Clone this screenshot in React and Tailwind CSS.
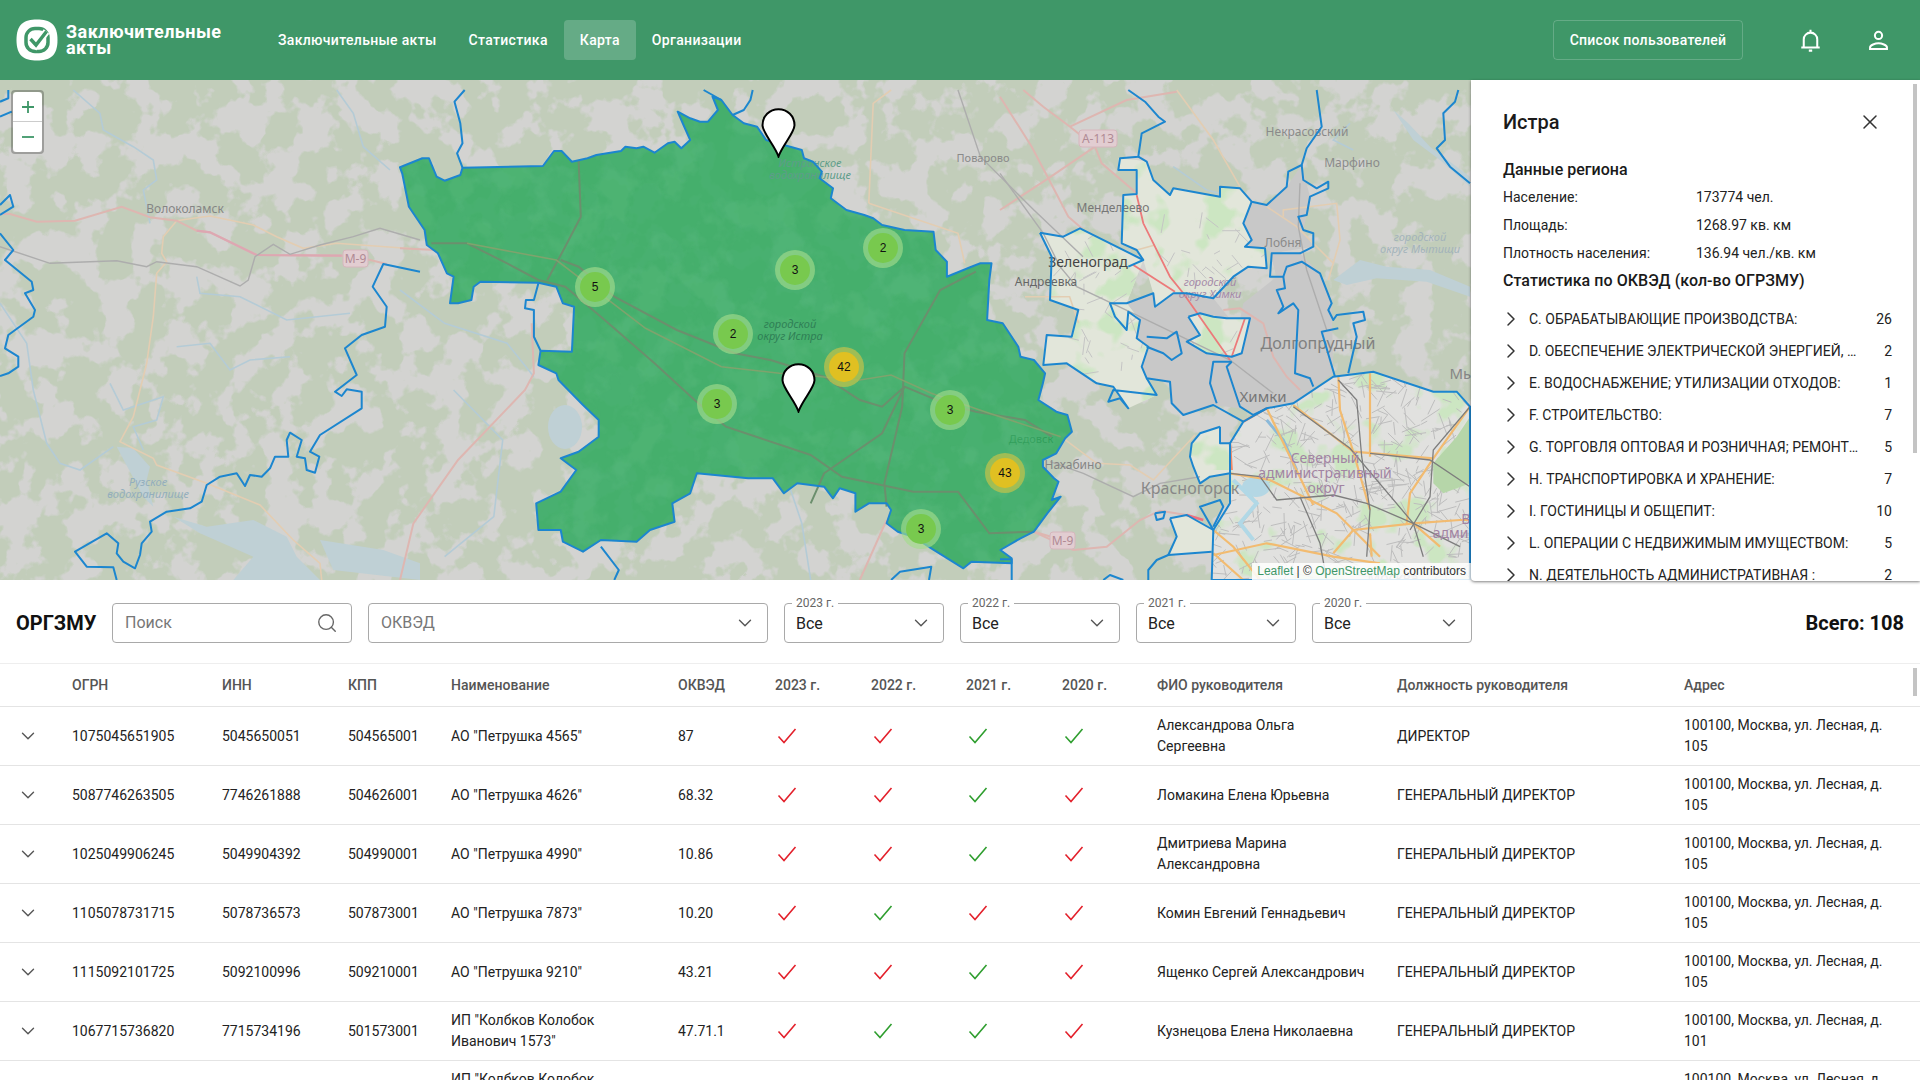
import React from "react";
import { Search, ChevronDown, ChevronRight, X } from "lucide-react";

// reads "x,y x,y" traced off the crops and turns it into page coords
const conv = (ox, oy, sx, sy) => (s) =>
  s.trim().split(/\s+/).map((p) => {
    const [x, y] = p.split(",").map(Number);
    return `${(ox + x / sx).toFixed(1)},${(oy + y / sy).toFixed(1)}`;
  }).join(" ");
const west = conv(0, 90, 3, 3);
const mid = conv(400, 90, 2.24, 3);
const east = conv(1000, 90, 3, 3);

const REGION = mid(`0,232 50,205 65,205 82,260 100,272 135,255 140,233 320,228 345,183 362,183 385,215 420,205 440,195 495,183 505,170 530,175 545,170 570,188 600,160 615,155 630,175 650,150 635,105 622,65 650,85 672,95 690,95 712,60 700,20 720,30 745,75 770,100 800,110 820,150 860,165 900,180 905,205 925,215 945,245 940,265 970,295 965,325 1000,360 1040,375 1060,385 1080,405 1130,420 1195,425 1200,480 1225,515 1225,560 1280,530 1300,520 1325,520 1320,570 1315,690 1350,700 1385,770 1390,800 1420,810 1445,850 1440,880 1430,930 1470,965 1495,975 1505,1025 1490,1045 1470,1090 1440,1110 1440,1130 1465,1165 1475,1175 1460,1230 1480,1220 1450,1270 1420,1325 1390,1345 1345,1380 1370,1405 1370,1420 1280,1415 1262,1435 1190,1375 1150,1340 1115,1325 1090,1300 1100,1260 1090,1240 1050,1240 1020,1265 1020,1210 985,1195 970,1225 950,1190 890,1180 860,1210 835,1165 780,1165 665,1150 660,1170 650,1210 610,1240 615,1295 560,1320 530,1355 450,1350 410,1385 365,1355 360,1320 310,1320 305,1240 360,1205 395,1140 360,1105 400,1085 445,1040 445,990 410,945 355,870 350,850 310,825 315,782 385,785 390,650 365,640 350,590 310,578 180,575 165,590 160,630 130,640 112,640 120,560 105,550 85,490 60,465 55,420 20,350 5,250`);

const MOSCOW = east(`635,1470 640,1320 690,1240 690,1060 730,995 800,955 880,940 1000,860 1120,845 1300,905 1370,905 1410,950 1410,1470`);

// pale built-up and park fills around Khimki and Zelenograd
const LIGHT = [
  east(`410,240 355,240 355,205 410,210 440,215 460,270 510,315 520,295 660,320 660,290 720,295 755,335 730,400 755,450 735,470 795,475 800,535 745,530 700,560 640,625 560,610 520,610 465,650 460,610 430,510 410,480 365,460 370,315 410,312`),
  east(`120,428 190,440 240,415 430,510 380,640 420,690 410,745 445,770 425,830 440,865 470,915 385,955 340,890 290,880 200,820 130,825 140,735 215,740 235,660 150,630 155,500`),
  east(`565,680 600,670 640,680 680,685 750,685 725,790 695,800 620,790 560,755 600,735`),
  east(`660,1010 600,1030 575,1060 570,1100 580,1130 600,1180 630,1160 690,1150 690,1060 660,1060`),
  east(`510,1285 560,1275 640,1320 635,1385 510,1395 530,1340`),
];
const GRAY = [
  east(`380,640 460,610 520,610 640,625 700,700 760,960 640,945 550,975 515,940 510,875 440,865 425,830 445,770 410,745 420,690`),
  east(`810,490 900,490 960,550 995,640 1000,850 880,940 760,975 680,830 695,815 730,640 830,560`),
  east(`800,345 860,290 905,225 930,320 920,375 910,420 940,470 815,490 795,475 735,470 755,450 730,400 755,335`),
];

const BORDERS = [
  west(`1260,545 1150,522 1118,590 1160,650 1155,710 1085,735 1035,775 1070,855 1005,905 1025,918 1040,898 1085,905 1085,955 960,1035 930,1085 958,1100 945,1148 920,1140 915,1105 890,1100 905,1050 870,1028 860,1050 865,1100 825,1100 810,1135 785,1160 750,1155 735,1188 710,1150 660,1160 620,1185 605,1235 570,1255 500,1265 450,1295 455,1325 425,1360 420,1395 405,1435 370,1415 350,1390 355,1360 320,1330 225,1385 260,1430 340,1432 350,1470`),
  west(`0,375 40,350 30,315 0,345`),
  west(`0,430 40,480 15,510 95,575 100,600 75,610 105,660 100,680 25,735 15,775 55,800 55,830 25,850 0,858`),
  west(`0,35 25,25 25,0`),
  west(`35,65 0,80`),
  mid(`145,0 122,35 135,100 140,160 128,190 140,233`),
  mid(`680,0 720,30`),
  mid(`790,0 785,30 770,60 745,75`),
  mid(`315,782 300,740 300,660 280,655 282,630 300,630 310,580`),
  mid(`450,1370 490,1440 480,1470`),
  mid(`1100,1470 1120,1445 1190,1430 1185,1470`),
  east(`385,0 435,35 475,80 495,95 425,130 415,200 360,205 355,240 410,240 410,312 370,315 365,460 410,480 430,510 385,530`),
  east(`415,200 440,215 460,270 510,315 520,295 660,320 660,290 720,295 755,335 800,345 860,290 865,245 905,225 920,175 965,110 950,0`),
  east(`755,335 730,400 755,450 735,470 795,475 800,535 745,530 700,560 640,625 560,610 520,610 465,650 460,610 380,640 330,640 345,680 380,720 385,665 420,690 410,745 445,770 425,830 440,865 510,875 515,940 550,975 640,945 730,995`),
  east(`905,225 910,270 950,295 985,275 985,295 930,320 920,375 895,380 910,420 940,430 940,470 900,490 815,490 810,560 850,560 860,530 905,515 960,550 995,640 985,660 1000,690 1010,675 1090,665 1095,690 1060,700 1070,740 1045,850`),
  east(`1005,860 965,725 1015,715`),
  east(`850,560 855,595 830,600 850,650 835,670 880,640 895,660 885,850 930,865 940,890`),
  east(`120,428 190,440 240,415 430,510`),
  east(`120,428 155,500 150,630 235,660 215,740 140,735 130,825 200,820 290,880 340,890 385,955 360,925 325,935 340,900 470,915 440,865`),
  east(`440,740 500,745 530,725 545,790 515,810 490,790 440,770`),
  east(`565,680 600,670 640,680 680,685 750,685 725,790 695,800 620,790 560,755 600,735 565,680`),
  east(`695,815 640,815 630,880 650,940`),
  east(`695,815 680,830 720,950 760,975 800,955`),
  east(`660,1010 600,1030 575,1060 570,1100 580,1130 600,1180 630,1160 690,1150`),
  east(`660,1010 660,1060 690,1060`),
  east(`465,1270 495,1265 490,1285 470,1290 465,1270`),
  east(`510,1285 560,1275 640,1320 600,1250 660,1230 670,1250 640,1310`),
  east(`510,1285 530,1340 505,1395 635,1385`),
  east(`445,1470 445,1440 470,1410 505,1395`),
  east(`310,1470 330,1455 370,1470`),
  east(`0,1408 35,1408 35,1470`),
  east(`1375,0 1365,35 1330,70 1335,150 1310,175 1350,230 1410,280`),
];

const RIVERS = [
  west(`220,0 300,70 310,120 400,170 460,210 470,270 430,300 450,400`),
  west(`1010,0 1060,70 1090,170 1170,240`),
  west(`530,770 630,760 690,840 750,810 870,800`),
  west(`590,560 600,610 720,620 860,690 1050,670`),
  west(`0,640 80,760 100,900 140,1060 180,1120 240,1140 340,1070`),
  west(`330,880 370,960 490,920 470,990 400,1010 430,1080`),
  east(`520,230 620,300 700,320`),
  east(`1050,100 1000,150 1060,180`),
  mid(`0,600 100,700 240,760 300,860`),
  mid(`120,900 230,1050 210,1280 100,1400`),
  mid(`870,1180 900,1300 920,1470`),
];
const PINK = [
  west(`0,372 30,372 110,395 225,392 365,350 450,382 530,392 590,422 630,427 770,495 1025,497 1110,510 1160,522`),
  mid(`0,475 80,480`),
  mid(`1420,1325 1470,1345`),
  east(`0,20 95,170 145,265 205,380 245,415`),
  east(`0,360 145,265 285,170 210,110 130,50 70,0`),
  east(`285,170 305,220 410,310`),
  east(`210,110 380,30 530,5`),
  east(`100,1325 220,1380 320,1370 420,1290 480,1262 560,1275`),
  east(`670,660 720,655 790,700 820,800 860,860 900,900`),
  mid(`0,1470 30,1300 130,1110 280,900 300,850 295,700`),
  mid(`1030,1470 1090,1290`),
];
const TAN = [
  west(`530,392 580,385 630,378 760,405 830,440 910,475 1010,460 1260,478`),
  west(`530,392 490,440 485,490 500,515 470,550 460,680 440,820 400,980 360,1055 460,1105 470,1125 620,1180 780,1245 880,1350 960,1420 965,1470`),
  mid(`1050,340 1060,40 1100,0`),
  mid(`1050,340 1250,430 1265,520`),
  mid(`1400,620 1500,620 1520,700`),
  east(`530,0 640,150 720,290`),
  east(`800,350 890,410 1000,520`),
  east(`850,380 850,360 1010,340 1020,450 985,570`),
  east(`410,480 465,465`),
  east(`190,1045 290,1120 390,1125 460,1170 585,1035`),
];
const RAIL = [
  west(`0,470 150,520 350,512 440,530 470,515 590,530 720,588 745,570 765,500 820,463 870,493 960,465 1060,440 1140,415 1260,450`),
  east(`0,250 130,430 180,530 230,590 420,680 690,810 820,910`),
  east(`900,280 895,410 920,540 980,720`),
  east(`150,1115 250,1150 400,1220 480,1180 600,1160`),
  mid(`1250,0 1300,200 1420,360 1530,500`),
];
const WARM = [east(`410,315 430,400 510,560 550,610 690,810`), east(`735,685 695,800`), east(`400,525 525,605`)];

// roads that run through the filled region, they show through as dark lines
const REGION_ROADS = [
  mid(`70,460 150,460 240,520 310,570 370,590 450,680 570,820 660,930 730,1010 920,1095 990,1160 1150,1205 1250,1205 1320,1330 1420,1325`),
  mid(`360,510 400,530 480,620 620,720 750,790 830,810 950,860 1030,930 1080,950 1130,890 1220,940 1290,965 1400,990 1460,1040`),
  mid(`400,210 405,380 370,470 330,570`),
  mid(`1290,545 1210,600 1130,790 1125,950 1085,1180 1090,1250`),
  mid(`1130,890 1080,1030 950,1150 920,1240`),
];
const REGION_TAN = [mid(`150,460 350,510 550,715 720,830 850,850 1030,870 1100,855 1190,910 1310,965 1480,1040`)];

const MOSCOW_ROADS = [
  east(`800,955 940,1245`),
  east(`880,945 1060,1085 1300,1105 1410,950`),
  east(`1015,855 1020,960 1060,1085 1110,1260`),
  east(`1110,850 1110,1100`),
  east(`690,1150 810,1170 1010,1270 1140,1400`),
  east(`690,1150 580,1035`),
  east(`1300,1105 1230,1210 1220,1300`),
  east(`1000,1390 1060,1320 1240,1300 1320,1370`),
  east(`640,1395 800,1360 1000,1400 1140,1420`),
  east(`640,1320 700,1370 780,1470`),
  east(`1240,1300 1380,1290 1410,1290`),
  east(`640,1390 730,1470`),
  east(`1110,1330 1115,1400`),
];
const MOSCOW_RAIL = [
  east(`1015,870 1070,930 1085,1100 1110,1260 1100,1400`),
  east(`690,1150 780,1160 830,1230 1000,1215 1100,1240 1240,1300 1380,1370`),
  east(`880,950 1050,1075 1240,1300 1270,1400`),
  east(`900,1220 960,1360 980,1470`),
  east(`1410,950 1300,1080 1290,1220 1230,1320`),
  east(`1110,1090 1290,1110 1410,1190`),
];

// thin grey street mesh for the city fills, seeded so it stays put
let seed = 41;
const rnd = () => {
  seed = (seed * 16807) % 2147483647;
  return seed / 2147483647;
};
const streets = Array.from({ length: 520 }, () => {
  const x = 1205 + rnd() * 270;
  const y = 370 + rnd() * 215;
  const a = rnd() * 6.28;
  const l = 6 + rnd() * 18;
  return `M${x.toFixed(1)} ${y.toFixed(1)}L${(x + Math.cos(a) * l).toFixed(1)} ${(y + Math.sin(a) * l).toFixed(1)}`;
}).join("");
const streetsNorth = Array.from({ length: 110 }, () => {
  const x = 1045 + rnd() * 230;
  const y = 225 + rnd() * 175;
  const a = rnd() * 6.28;
  const l = 5 + rnd() * 15;
  return `M${x.toFixed(1)} ${y.toFixed(1)}L${(x + Math.cos(a) * l).toFixed(1)} ${(y + Math.sin(a) * l).toFixed(1)}`;
}).join("");

const LABELS = [
  ["Волоколамск", 185, 213, 12, "#858585"],
  ["Поварово", 983, 162, 11, "#8a8a8a"],
  ["Некрасовский", 1307, 136, 12, "#8a8a8a"],
  ["Марфино", 1352, 167, 12, "#8a8a8a"],
  ["Менделеево", 1113, 212, 12, "#777"],
  ["Зеленоград", 1088, 267, 14, "#444"],
  ["Андреевка", 1046, 286, 12, "#666"],
  ["Лобня", 1283, 247, 12, "#8a8a8a"],
  ["Долгопрудный", 1318, 349, 16, "#808080"],
  ["Мы", 1462, 379, 15, "#858585"],
  ["Химки", 1263, 402, 15, "#777"],
  ["Дедовск", 1031, 443, 11, "#4b6a55"],
  ["Нахабино", 1073, 469, 12, "#858585"],
  ["Красногорск", 1190, 494, 16, "#888"],
  ["Москва", 1393, 583, 14, "#888"],
];
const ITALIC = [
  ["Рузское", 148, 486, "#93aebd"],
  ["водохранилище", 148, 498, "#93aebd"],
  ["городской", 1420, 241, "#a3b3bb"],
  ["округ Мытищи", 1420, 253, "#a3b3bb"],
  ["городской", 1210, 286, "#a58aa8"],
  ["округ Химки", 1210, 298, "#a58aa8"],
];
// these two sit on top of the green fill
const ITALIC_OVER = [
  ["Истринское", 810, 167, "#5e9d8a"],
  ["водохранилище", 810, 179, "#5e9d8a"],
  ["городской", 790, 328, "#2f7f55"],
  ["округ Истра", 790, 340, "#2f7f55"],
];
const DISTRICT = [
  ["Северный", 1325, 463],
  ["административный", 1325, 478],
  ["округ", 1326, 493],
  ["Во", 1470, 524],
  ["админ", 1455, 538],
];

function MapDrawing() {
  return (
    <svg className="absolute inset-0 h-full w-full" viewBox="0 80 1471 500" preserveAspectRatio="none">
      <defs>
        <filter id="forest" x="0" y="0" width="100%" height="100%" colorInterpolationFilters="sRGB">
          <feTurbulence type="fractalNoise" baseFrequency="0.03" numOctaves="4" seed="9" />
          <feColorMatrix values="0 0 0 0 0.76  0 0 0 0 0.805  0 0 0 0 0.73  14 0 0 0 -6.2" />
        </filter>
        <filter id="cloud" x="0" y="0" width="100%" height="100%" colorInterpolationFilters="sRGB">
          <feTurbulence type="fractalNoise" baseFrequency="0.03" numOctaves="3" seed="4" />
          <feColorMatrix values="0 0 0 0 0.8  0 0 0 0 0.9  0 0 0 0 0.76  0 9 0 0 -4.9" />
        </filter>
        <filter id="patch" x="0" y="0" width="100%" height="100%" colorInterpolationFilters="sRGB">
          <feTurbulence type="fractalNoise" baseFrequency="0.03" numOctaves="4" seed="21" />
          <feColorMatrix values="0 0 0 0 0.5  0 0 0 0 0.8  0 0 0 0 0.62  6 0 0 0 -2.9" />
        </filter>
        <clipPath id="moscow"><polygon points={MOSCOW} /></clipPath>
        <clipPath id="district"><polygon points={REGION} /></clipPath>
        <clipPath id="light">
          {LIGHT.map((p, i) => <polygon key={i} points={p} />)}
        </clipPath>
      </defs>

      <rect x="0" y="80" width="1471" height="500" fill="#d3d3d1" />
      <rect x="0" y="80" width="1471" height="500" filter="url(#forest)" />

      {/* water */}
      <g fill="#bfd0d5">
        <polygon points={west(`520,1280 620,1310 760,1290 860,1340 890,1400 960,1470 700,1470 760,1400 600,1330`)} />
        <polygon points={west(`350,1070 400,1075 450,1130 440,1170 460,1250 430,1220`)} />
        <polygon points={west(`960,1350 1150,1380 1260,1420 1260,1470 1000,1440`)} />
        <polygon points={east(`1180,60 1225,100 1290,170 1410,260 1410,290 1320,210 1240,150`)} />
        <polygon points={east(`1000,570 1080,510 1160,530 1290,540 1410,590 1410,620 1280,575 1130,565 1040,585`)} />
        <ellipse cx="565" cy="427" rx="17" ry="22" />
      </g>
      {RIVERS.map((p, i) => <polyline key={i} points={p} fill="none" stroke="#b4cbd6" strokeWidth="1.6" />)}

      {/* built up areas */}
      {GRAY.map((p, i) => <polygon key={i} points={p} fill="#c8c8c8" />)}
      {LIGHT.map((p, i) => <polygon key={i} points={p} fill="#e2e6da" />)}
      <g clipPath="url(#light)">
        <rect x="1000" y="150" width="300" height="320" filter="url(#cloud)" />
        <path d={streetsNorth} stroke="#c4c4c4" strokeWidth="1" fill="none" />
      </g>

      {/* Moscow */}
      <polygon points={MOSCOW} fill="#e1e1df" />
      <g clipPath="url(#moscow)">
        <rect x="1200" y="360" width="280" height="230" filter="url(#cloud)" />
        <path d={streets} stroke="#bdbdbd" strokeWidth="1" fill="none" />
        <ellipse cx="1256" cy="487" rx="14" ry="10" fill="#b4d7e4" />
        <polyline points={east(`800,990 850,1050 890,1140`)} fill="none" stroke="#8bb9d9" strokeWidth="3" />
        <polyline points={east(`700,1170 770,1240 720,1300 760,1350`)} fill="none" stroke="#b1d8e6" strokeWidth="4" />
        <polygon points={east(`1410,980 1370,1040 1300,1120 1300,1180 1330,1210 1410,1180`)} fill="#b6d6a9" />
        {MOSCOW_ROADS.map((p, i) => <polyline key={i} points={p} fill="none" stroke="#f2bb70" strokeWidth="2.2" />)}
        {MOSCOW_RAIL.map((p, i) => <polyline key={i} points={p} fill="none" stroke="#7d7d7d" strokeWidth="1.3" />)}
      </g>

      {/* roads */}
      {TAN.map((p, i) => <polyline key={i} points={p} fill="none" stroke="#e3cdb2" strokeWidth="1.6" />)}
      {PINK.map((p, i) => <polyline key={i} points={p} fill="none" stroke="#deb6b1" strokeWidth="2" />)}
      <polyline points={west(`590,422 630,427 770,495 1025,497`)} fill="none" stroke="#dda7b2" strokeWidth="2.2" />
      {RAIL.map((p, i) => <polyline key={i} points={p} fill="none" stroke="#adadad" strokeWidth="1.4" />)}
      {WARM.map((p, i) => <polyline key={i} points={p} fill="none" stroke="#ec7a7a" strokeWidth="1.800" />)}
      <polyline points={east(`690,1060 695,1140`)} fill="none" stroke="#f08a68" strokeWidth="2.4" />
      <polyline points={east(`730,995 800,955`)} fill="none" stroke="#f08a68" strokeWidth="2.4" />
      <polyline points={east(`560,1275 610,1290`)} fill="none" stroke="#ee6f80" strokeWidth="2.4" />

      <g fontFamily="'Noto Sans', sans-serif" textAnchor="middle">
        {LABELS.map(([t, x, y, s, c]) => <text key={t} x={x} y={y} fontSize={s} fill={c}>{t}</text>)}
        {ITALIC.map(([t, x, y, c]) => <text key={t + x} x={x} y={y} fontSize="11" fontStyle="italic" fill={c}>{t}</text>)}
        {DISTRICT.map(([t, x, y]) => <text key={t} x={x} y={y} fontSize="14" fill="#a283a3">{t}</text>)}
      </g>

      {/* road shields */}
      <g fontFamily="'Noto Sans', sans-serif" fontSize="12" textAnchor="middle" fill="#b08a94">
        <rect x="343" y="250" width="25" height="17" rx="3" fill="#e2cdd1" stroke="#d6b6bd" />
        <text x="355.500" y="263">М-9</text>
        <rect x="1050" y="532" width="25" height="17" rx="3" fill="#e2cdd1" stroke="#d6b6bd" />
        <text x="1062.500" y="545">М-9</text>
        <rect x="1079" y="130" width="38" height="17" rx="3" fill="#e2cdd1" stroke="#d6b6bd" />
        <text x="1098" y="143">А-113</text>
      </g>

      {/* selected district */}
      <polygon points={REGION} fill="#2aa85a" fillOpacity="0.82" stroke="none" />
      <g clipPath="url(#district)">
        <rect x="400" y="90" width="680" height="490" filter="url(#patch)" opacity="0.14" />
      </g>
      {REGION_ROADS.map((p, i) => <polyline key={i} points={p} fill="none" stroke="#6b8f6d" strokeWidth="2" />)}
      {REGION_TAN.map((p, i) => <polyline key={i} points={p} fill="none" stroke="#7fa36d" strokeWidth="1.6" />)}
      <g fontFamily="'Noto Sans', sans-serif" textAnchor="middle" fontSize="11" fontStyle="italic">
        {ITALIC_OVER.map(([t, x, y, c]) => <text key={t + x} x={x} y={y} fill={c}>{t}</text>)}
      </g>

      {BORDERS.map((p, i) => <polyline key={i} points={p} fill="none" stroke="#1c86cf" strokeWidth="2" strokeLinejoin="round" />)}
      <polygon points={MOSCOW} fill="none" stroke="#1c86cf" strokeWidth="2" />
      <polygon points={REGION} fill="none" stroke="#1c86cf" strokeWidth="2" strokeLinejoin="round" />
    </svg>
  );
}

const CLUSTERS = [
  { n: 5, pos: "left-[575px] top-[187px]" },
  { n: 2, pos: "left-[863px] top-[148px]" },
  { n: 3, pos: "left-[775px] top-[170px]" },
  { n: 2, pos: "left-[713px] top-[234px]" },
  { n: 42, pos: "left-[824px] top-[267px]", hot: true },
  { n: 3, pos: "left-[697px] top-[304px]" },
  { n: 3, pos: "left-[930px] top-[310px]" },
  { n: 43, pos: "left-[985px] top-[373px]", hot: true },
  { n: 3, pos: "left-[901px] top-[429px]" },
];

function Pin({ className }) {
  return (
    <svg className={`absolute ${className}`} width="35" height="50" viewBox="0 0 35 50">
      <path d="M17.500 48.500C14 38 1.500 24.500 1.500 17.200C1.500 8 8.500 1.200 17.500 1.200S33.500 8 33.500 17.200C33.500 24.500 21 38 17.500 48.500Z" fill="#fff" stroke="#000" strokeWidth="2" />
    </svg>
  );
}

function MapPane() {
  return (
    <div className="relative min-w-0 flex-1 overflow-hidden">
      <MapDrawing />

      {CLUSTERS.map((c) => (
        <div
          key={c.pos}
          className={`absolute flex h-10 w-10 items-center justify-center rounded-full ${c.pos} ${c.hot ? "bg-[#b5c04f]/80" : "bg-[#a3db8c]/65"}`}
        >
          <div className={`flex h-[30px] w-[30px] items-center justify-center rounded-full font-['Liberation_Sans',sans-serif] text-xs text-[#111] ${c.hot ? "bg-[#e0c022]" : "bg-[#78c94e]"}`}>
            {c.n}
          </div>
        </div>
      ))}

      <Pin className="left-[761px] top-[28px]" />
      <Pin className="left-[781px] top-[283px]" />

      {/* zoom control */}
      <div className="absolute left-[11px] top-[10px] w-[33px] rounded border-2 border-black/25 bg-clip-padding">
        <div className="flex h-[30px] items-center justify-center rounded-t-sm border-b border-[#ccc] bg-white text-[#3f9768]">
          <svg width="14" height="14" viewBox="0 0 14 14"><path d="M7 1v12M1 7h12" stroke="currentColor" strokeWidth="1.800" /></svg>
        </div>
        <div className="flex h-[30px] items-center justify-center rounded-b-sm bg-white text-[#3f9768]">
          <svg width="14" height="14" viewBox="0 0 14 14"><path d="M1 7h12" stroke="currentColor" strokeWidth="1.800" /></svg>
        </div>
      </div>

      <div className="absolute bottom-0 right-0 bg-white/85 px-[5px] font-['Liberation_Sans',sans-serif] text-xs leading-[17px] text-[#333]">
        <span className="text-[#3f9768]">Leaflet</span> | © <span className="text-[#3f9768]">OpenStreetMap</span> contributors
      </div>
    </div>
  );
}

const STATS = [
  ["C. ОБРАБАТЫВАЮЩИЕ ПРОИЗВОДСТВА:", 26],
  ["D. ОБЕСПЕЧЕНИЕ ЭЛЕКТРИЧЕСКОЙ ЭНЕРГИЕЙ, ГАЗОМ И ПАРОМ:", 2],
  ["E. ВОДОСНАБЖЕНИЕ; УТИЛИЗАЦИИ ОТХОДОВ:", 1],
  ["F. СТРОИТЕЛЬСТВО:", 7],
  ["G. ТОРГОВЛЯ ОПТОВАЯ И РОЗНИЧНАЯ; РЕМОНТ АВТОТРАНСПОРТНЫХ СРЕДСТВ:", 5],
  ["H. ТРАНСПОРТИРОВКА И ХРАНЕНИЕ:", 7],
  ["I. ГОСТИНИЦЫ И ОБЩЕПИТ:", 10],
  ["L. ОПЕРАЦИИ С НЕДВИЖИМЫМ ИМУЩЕСТВОМ:", 5],
  ["N. ДЕЯТЕЛЬНОСТЬ АДМИНИСТРАТИВНАЯ :", 2],
];

function RegionPanel() {
  return (
    <aside className="relative z-10 h-[501px] w-[449px] shrink-0 overflow-hidden rounded-bl bg-white pl-8 pr-7 text-[#222] shadow-[0_1px_3px_rgba(0,0,0,0.5)]">
      <div className="absolute right-[3px] top-1 h-[369px] w-1 bg-[#c4c4c4]" />
      <div className="mt-[27px] flex h-[30px] items-center justify-between pr-[10px]">
        <h2 className="text-xl font-medium text-[#1a1a1a]">Истра</h2>
        <X size={24} strokeWidth={1.5} className="text-[#333]" />
      </div>
      <h3 className="mb-px mt-[21px] h-6 text-base font-medium leading-6 text-[#1a1a1a]">Данные региона</h3>
      {[
        ["Население:", "173774 чел."],
        ["Площадь:", "1268.97 кв. км"],
        ["Плотность населения:", "136.94 чел./кв. км"],
      ].map(([k, v]) => (
        <div key={k} className="flex h-7 items-center text-sm">
          <span className="w-[193px]">{k}</span>
          <span>{v}</span>
        </div>
      ))}
      <h3 className="h-7 whitespace-nowrap text-base font-medium leading-7 tracking-[0.05px] text-[#1a1a1a]">Статистика по ОКВЭД (кол-во ОГРЗМУ)</h3>
      <ul className="mt-2">
        {STATS.map(([name, n]) => (
          <li key={name} className="flex h-8 items-center text-sm">
            <ChevronRight size={24} strokeWidth={1.5} className="-ml-1 shrink-0 text-[#333]" />
            <span className="ml-[6px] min-w-0 flex-1 truncate">{name}</span>
            <span className="w-8 shrink-0 text-right">{n}</span>
          </li>
        ))}
      </ul>
    </aside>
  );
}

function YearSelect({ year }) {
  return (
    <div className="relative flex h-10 w-40 shrink-0 items-center justify-between rounded border border-[#a9a9a9] pl-[11px] pr-[11px]">
      <span className="absolute -top-[8px] left-[7px] bg-white px-1 text-xs leading-[14px] text-[#666]">{year}</span>
      <span className="pt-px text-base text-[#222]">Все</span>
      <ChevronDown size={22} strokeWidth={1.5} className="text-[#555]" />
    </div>
  );
}

function FilterBar() {
  return (
    <div className="flex h-[84px] shrink-0 items-center gap-4 border-b border-[#eee] pl-4 pr-4 pt-[3px]">
      <h2 className="w-20 shrink-0 whitespace-nowrap text-xl font-bold text-[#111]">ОРГЗМУ</h2>
      <div className="flex h-10 w-60 shrink-0 items-center justify-between rounded border border-[#a9a9a9] pl-3 pr-[13px]">
        <span className="text-base text-[#777]">Поиск</span>
        <Search size={22} strokeWidth={1.5} className="text-[#666]" />
      </div>
      <div className="flex h-10 w-[400px] shrink-0 items-center justify-between rounded border border-[#a9a9a9] pl-3 pr-[11px]">
        <span className="text-base text-[#777]">ОКВЭД</span>
        <ChevronDown size={22} strokeWidth={1.5} className="text-[#555]" />
      </div>
      {["2023 г.", "2022 г.", "2021 г.", "2020 г."].map((y) => <YearSelect key={y} year={y} />)}
      <div className="ml-auto whitespace-nowrap text-xl font-bold text-[#111]">Всего: 108</div>
    </div>
  );
}

const COLS = "grid grid-cols-[72px_150px_126px_103px_227px_97px_96px_95px_96px_95px_240px_287px_236px]";

const ROWS = [
  { ogrn: "1075045651905", inn: "5045650051", kpp: "504565001", name: 'АО "Петрушка 4565"', okved: "87", marks: [0, 0, 1, 1], head: "Александрова Ольга Сергеевна", pos: "ДИРЕКТОР", addr: "100100, Москва, ул. Лесная, д. 105" },
  { ogrn: "5087746263505", inn: "7746261888", kpp: "504626001", name: 'АО "Петрушка 4626"', okved: "68.32", marks: [0, 0, 1, 0], head: "Ломакина Елена Юрьевна", pos: "ГЕНЕРАЛЬНЫЙ ДИРЕКТОР", addr: "100100, Москва, ул. Лесная, д. 105" },
  { ogrn: "1025049906245", inn: "5049904392", kpp: "504990001", name: 'АО "Петрушка 4990"', okved: "10.86", marks: [0, 0, 1, 0], head: "Дмитриева Марина Александровна", pos: "ГЕНЕРАЛЬНЫЙ ДИРЕКТОР", addr: "100100, Москва, ул. Лесная, д. 105" },
  { ogrn: "1105078731715", inn: "5078736573", kpp: "507873001", name: 'АО "Петрушка 7873"', okved: "10.20", marks: [0, 1, 0, 0], head: "Комин Евгений Геннадьевич", pos: "ГЕНЕРАЛЬНЫЙ ДИРЕКТОР", addr: "100100, Москва, ул. Лесная, д. 105" },
  { ogrn: "1115092101725", inn: "5092100996", kpp: "509210001", name: 'АО "Петрушка 9210"', okved: "43.21", marks: [0, 0, 1, 0], head: "Ященко Сергей Александрович", pos: "ГЕНЕРАЛЬНЫЙ ДИРЕКТОР", addr: "100100, Москва, ул. Лесная, д. 105" },
  { ogrn: "1067715736820", inn: "7715734196", kpp: "501573001", name: 'ИП "Колбков Колобок Иванович 1573"', okved: "47.71.1", marks: [0, 1, 1, 0], head: "Кузнецова Елена Николаевна", pos: "ГЕНЕРАЛЬНЫЙ ДИРЕКТОР", addr: "100100, Москва, ул. Лесная, д. 101" },
  { ogrn: "1067715736821", inn: "7715734197", kpp: "501573002", name: 'ИП "Колбков Колобок Иванович 1574"', okved: "47.71.1", marks: [0, 1, 1, 0], head: "Кузнецова Елена Николаевна", pos: "ГЕНЕРАЛЬНЫЙ ДИРЕКТОР", addr: "100100, Москва, ул. Лесная, д. 101" },
];

function Mark({ ok }) {
  return (
    <svg width="20" height="16" viewBox="0 0 20 16" className={ok ? "text-[#2f9e2f]" : "text-[#e3202b]"}>
      <path d="M1.500 8.500L7 14.500L18.500 1" fill="none" stroke="currentColor" strokeWidth="1.600" />
    </svg>
  );
}

function OrgTable() {
  return (
    <div className="relative min-h-0 flex-1 overflow-hidden">
      <div className="absolute right-[3px] top-[4px] h-7 w-1 bg-[#c4c4c4]" />
      <div className={`${COLS} h-[43px] items-center border-b border-[#e4e4e4] text-sm font-medium text-[#555]`}>
        <span />
        {["ОГРН", "ИНН", "КПП", "Наименование", "ОКВЭД", "2023 г.", "2022 г.", "2021 г.", "2020 г.", "ФИО руководителя", "Должность руководителя", "Адрес"].map((h) => (
          <span key={h}>{h}</span>
        ))}
      </div>
      {ROWS.map((r) => (
        <div key={r.ogrn} className={`${COLS} h-[59px] items-center border-b border-[#e4e4e4] text-sm leading-[21px] text-[#222]`}>
          <ChevronDown size={22} strokeWidth={1.5} className="ml-[17px] text-[#555]" />
          <span>{r.ogrn}</span>
          <span>{r.inn}</span>
          <span>{r.kpp}</span>
          <span className="pr-8">{r.name}</span>
          <span>{r.okved}</span>
          {r.marks.map((m, i) => (
            <span key={i} className="pl-[2px]"><Mark ok={m === 1} /></span>
          ))}
          <span className="pr-[32px]">{r.head}</span>
          <span>{r.pos}</span>
          <span className="pr-4">{r.addr}</span>
        </div>
      ))}
    </div>
  );
}

function Logo() {
  return (
    <svg width="42" height="42" viewBox="0 0 42 42" className="shrink-0">
      <path d="M21 0.500C34 0.500 41.500 5 41.500 21S34 41.500 21 41.500S0.500 37 0.500 21S8 0.500 21 0.500Z" fill="#fff" />
      <rect x="10" y="9.500" width="22" height="23" rx="9" fill="none" stroke="#3f9768" strokeWidth="3.500" />
      <path d="M14.500 20L20 26L30.500 12.500" fill="none" stroke="#fff" strokeWidth="7" />
      <path d="M14.500 20L20 26L30.500 12.500" fill="none" stroke="#3f9768" strokeWidth="3.400" />
    </svg>
  );
}

function TopBar() {
  return (
    <header className="flex h-20 shrink-0 items-center bg-[#3f9768] pl-4 pr-[28px] text-white">
      <Logo />
      <div className="ml-2 w-[196px] text-[18px] font-bold leading-4 tracking-[0.45px]">
        Заключительные<br />акты
      </div>
      <nav className="flex h-10 text-sm font-medium tracking-[0.33px]">
        <a className="flex items-center px-4">Заключительные акты</a>
        <a className="flex items-center px-4">Статистика</a>
        <a className="flex items-center rounded bg-white/20 px-4">Карта</a>
        <a className="flex items-center px-4">Организации</a>
      </nav>
      <button type="button" className="ml-auto flex h-10 w-[190px] items-center justify-center rounded border border-white/20 text-sm font-medium tracking-[0.28px]">
        Список пользователей
      </button>
      <svg width="27" height="27" viewBox="0 0 24 24" fill="none" stroke="currentColor" strokeWidth="1.800" className="ml-[54px]">
        <path d="M6 18V11a6 6 0 0 1 12 0v7M3.800 18.200h16.400M12 2.500v2.500M10.500 21h3" />
      </svg>
      <svg width="27" height="27" viewBox="0 0 24 24" fill="none" stroke="currentColor" strokeWidth="1.800" className="ml-[41px]">
        <circle cx="12" cy="7.500" r="3.200" />
        <path d="M4.500 19.500v-1.300c0-2.200 4.700-3.700 7.500-3.700s7.500 1.500 7.500 3.700v1.300z" />
      </svg>
    </header>
  );
}

export default function App() {
  return (
    <div className="flex h-screen w-full flex-col overflow-hidden bg-white font-[Roboto,sans-serif]">
      <TopBar />
      <div className="flex h-[500px] shrink-0">
        <MapPane />
        <RegionPanel />
      </div>
      <FilterBar />
      <OrgTable />
    </div>
  );
}
